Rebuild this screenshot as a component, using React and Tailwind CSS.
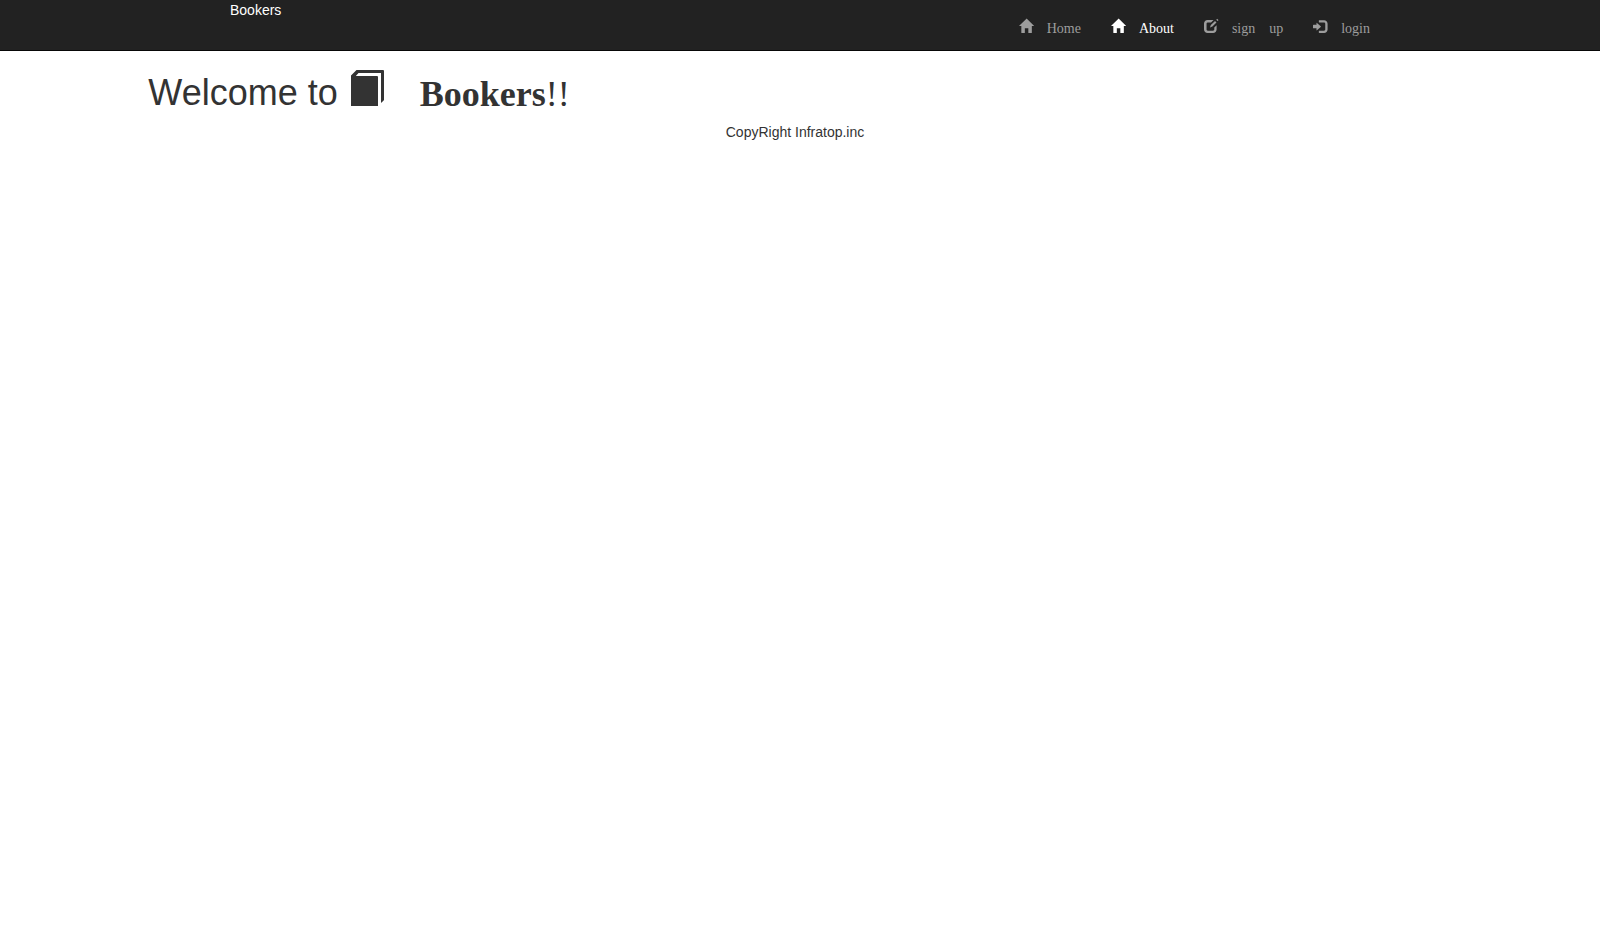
const HOME =
  'M18 618l620 608q8 7 18.5 7t17.5 -7l608 -608q8 -8 5.5 -13t-12.5 -5h-175v-575q0 -10 -7.5 -17.5t-17.5 -7.5h-250q-10 0 -17.5 7.5t-7.5 17.5v375h-300v-375q0 -10 -7.5 -17.5t-17.5 -7.5h-250q-10 0 -17.5 7.5t-7.5 17.5v575h-175q-10 0 -12.5 5t5.5 13z';
const EDIT =
  'M300 1110h520l-215 -200h-285q-40 0 -70 -30t-30 -70v-510q0 -40 30 -70t70 -30h460q40 0 70 30t30 70v170l200 190v-360q0 -125 -87.5 -212.5t-212.5 -87.5h-480q-125 0 -212.5 87.500t-87.500 212.500v510q0 125 87.500 212.500t212.500 87.500zM1115 1210q16 14 32 0l90 -90q16 -16 0 -32l-70 -66l-122 122zM945 1030l125 -125l-350 -350l-210 -80l75 205z';
const LOGIN =
  'M550 1100h400q125 0 212.5 -87.5t87.5 -212.5v-500q0 -125 -87.5 -212.5t-212.5 -87.5h-400q-21 0 -35.5 14.5t-14.5 35.5v100q0 21 14.5 35.5t35.5 14.5h400q41 0 70.5 29.5t29.5 70.5v500q0 41 -29.5 70.5t-70.5 29.5h-400q-21 0 -35.5 14.5t-14.5 35.5v100q0 21 14.5 35.5t35.5 14.5zM338 867l324 -284q16 -14 16 -33t-16 -33l-324 -284q-16 -14 -27 -9t-11 26v150h-250q-21 0 -35.5 14.5t-14.5 35.5v200q0 21 14.5 35.5t35.5 14.5h250v150q0 21 11 26t27 -9z';

function Glyph({ d }) {
  return (
    <svg className="mt-[3px] h-[14px] w-[14px] shrink-0 overflow-visible" viewBox="0 0 1200 1200" fill="currentColor">
      <path transform="matrix(1 0 0 -1 0 1200)" d={d} />
    </svg>
  );
}

const links = [
  { label: 'Home', d: HOME, cls: 'text-[#9d9d9d]' },
  { label: 'About', d: HOME, cls: 'text-white' },
  { label: 'sign up', d: EDIT, cls: 'text-[#9d9d9d] [word-spacing:10.5px]' },
  { label: 'login', d: LOGIN, cls: 'text-[#9d9d9d]' },
];

export default function App() {
  return (
    <div className="min-h-screen bg-white font-['Liberation_Sans',sans-serif] text-sm leading-5 text-[#333]">
      <header className="flex h-[51px] items-start justify-between border-b border-[#080808] bg-[#222] pr-[215px] pl-[230px]">
        <span className="text-white">Bookers</span>
        <nav className="flex font-['Liberation_Serif',serif] leading-[14px]">
          {links.map((l) => (
            <a key={l.label} href="#" className={`flex gap-[14px] px-[15px] pt-4 ${l.cls}`}>
              <Glyph d={l.d} />
              <span className="pt-[6px] whitespace-nowrap">{l.label}</span>
            </a>
          ))}
        </nav>
      </header>
      <main className="pt-5 pl-[148.33px]">
        <h1 className="flex h-[41px] items-start text-[36px] leading-[39.6px]">
          <span className="pt-[2px] whitespace-pre">Welcome to </span>
          <svg className="-mt-1 ml-[2px] h-[40px] w-[36px] shrink-0" viewBox="0 0 36 40" fill="currentColor">
            <path d="M6.500 3H33q1 0 1 1V32.500q0 .8-.6 1.300L31 36V6H8.500L5.800 9H27q1 0 1 1V38.500q0 .5-.5 .5H1.500q-.5 0-.5-.5V8.500z" />
          </svg>
          <span className="ml-[34px] pt-1 font-['Liberation_Serif',serif]">
            <strong>Bookers</strong>!!
          </span>
        </h1>
      </main>
      <footer className="pt-[10px] pr-[10px] text-center">CopyRight Infratop.inc</footer>
    </div>
  );
}
